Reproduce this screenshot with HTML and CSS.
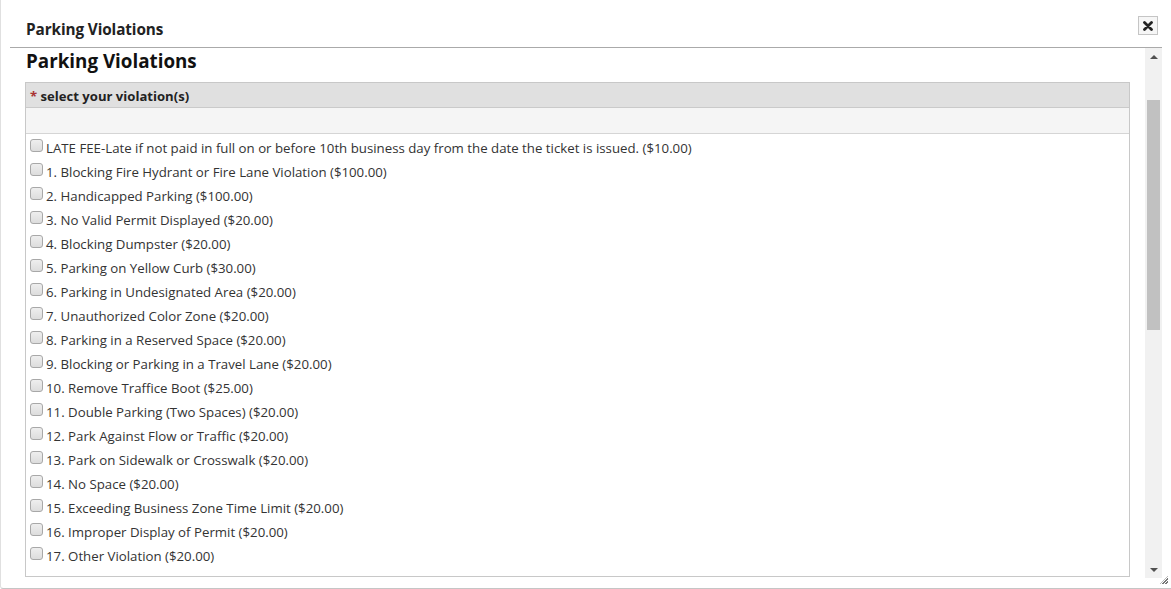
FILE: index.html
```html
<!DOCTYPE html>
<html>
<head>
<meta charset="utf-8">
<link rel="stylesheet" href="styles.css">
</head>
<body>
<div class="dialog">
  <div class="titlebar">
    <span class="title">Parking Violations</span>
    <button class="close" type="button" aria-label="Close">
      <svg width="10" height="10" viewBox="0 0 10 10"><path d="M1.5 1.5 L8.5 8.5 M8.5 1.5 L1.5 8.5" stroke="#222" stroke-width="2.8" stroke-linecap="round"/></svg>
    </button>
  </div>
  <div class="body">
    <div class="content">
      <h2 class="heading">Parking Violations</h2>
      <div class="box">
        <div class="box-head"><span class="req">*</span> select your violation(s)</div>
        <div class="box-sub"></div>
        <ul class="list">
          <li><input type="checkbox"><span>LATE FEE-Late if not paid in full on or before 10th business day from the date the ticket is issued. ($10.00)</span></li>
          <li><input type="checkbox"><span>1. Blocking Fire Hydrant or Fire Lane Violation ($100.00)</span></li>
          <li><input type="checkbox"><span>2. Handicapped Parking ($100.00)</span></li>
          <li><input type="checkbox"><span>3. No Valid Permit Displayed ($20.00)</span></li>
          <li><input type="checkbox"><span>4. Blocking Dumpster ($20.00)</span></li>
          <li><input type="checkbox"><span>5. Parking on Yellow Curb ($30.00)</span></li>
          <li><input type="checkbox"><span>6. Parking in Undesignated Area ($20.00)</span></li>
          <li><input type="checkbox"><span>7. Unauthorized Color Zone ($20.00)</span></li>
          <li><input type="checkbox"><span>8. Parking in a Reserved Space ($20.00)</span></li>
          <li><input type="checkbox"><span>9. Blocking or Parking in a Travel Lane ($20.00)</span></li>
          <li><input type="checkbox"><span>10. Remove Traffice Boot ($25.00)</span></li>
          <li><input type="checkbox"><span>11. Double Parking (Two Spaces) ($20.00)</span></li>
          <li><input type="checkbox"><span>12. Park Against Flow or Traffic ($20.00)</span></li>
          <li><input type="checkbox"><span>13. Park on Sidewalk or Crosswalk ($20.00)</span></li>
          <li><input type="checkbox"><span>14. No Space ($20.00)</span></li>
          <li><input type="checkbox"><span>15. Exceeding Business Zone Time Limit ($20.00)</span></li>
          <li><input type="checkbox"><span>16. Improper Display of Permit ($20.00)</span></li>
          <li><input type="checkbox"><span>17. Other Violation ($20.00)</span></li>
        </ul>
      </div>
    </div>
    <div class="scrollbar">
      <div class="arrow up"></div>
      <div class="track"><div class="thumb"></div></div>
      <div class="arrow down"></div>
    </div>
  </div>
  <div class="footer"><div class="grip"></div></div>
</div>
</body>
</html>
```
FILE: styles.css
```css
* { box-sizing: border-box; }
html, body { margin: 0; padding: 0; background: #fff; }
body {
  font-family: "Open Sans", "Noto Sans", sans-serif;
  color: #333;
  width: 1171px;
  height: 589px;
  overflow: hidden;
}
.dialog {
  width: 1171px;
  height: 589px;
  border-bottom: 1px solid #c5c5c5;
  border-left: 1px solid #e0e0e0;
  border-bottom-left-radius: 3px;
  display: flex;
  flex-direction: column;
}
.titlebar {
  height: 47px;
  display: flex;
  align-items: center;
  justify-content: space-between;
  padding: 11px 13px 0 25px;
}
.title {
  font-weight: 700;
  font-size: 15.3px;
  color: #222;
  letter-spacing: -0.1px;
}
.close {
  width: 20px;
  height: 19px;
  margin-top: -7px;
  border: 1px solid #c5c5c5;
  background: #f6f6f6;
  padding: 0;
  display: flex;
  align-items: center;
  justify-content: center;
}
.body {
  margin-left: 9px;
  width: 1152px;
  height: 531px;
  border-top: 1px solid #aaa;
  display: flex;
}
.content {
  flex: 1;
  overflow: hidden;
  padding: 0 15px 0 15px;
}
.heading {
  margin: 1px 0 0 1px;
  font-size: 18.8px;
  font-weight: 700;
  color: #111;
  line-height: 24px;
  height: 33px;
}
.box {
  border: 1px solid #c8c8c8;
  height: 495px;
}
.box-head {
  height: 25px;
  background: #e0e0e0;
  border-bottom: 1px solid #cacaca;
  font-size: 13.1px;
  font-weight: 700;
  color: #222;
  padding-left: 4px;
  line-height: 26px;
}
.req { color: #a33; }
.box-sub {
  height: 26px;
  background: #f5f5f5;
  border-bottom: 1px solid #d5d5d5;
}
.list {
  list-style: none;
  margin: 0;
  padding: 2px 0 0 4px;
}
.list li {
  height: 24px;
  display: flex;
  align-items: center;
  font-size: 13.25px;
  color: #333;
}
.list input {
  margin: 0 3px 0 0;
  width: 13px;
  height: 13px;
  position: relative;
  top: -3px;
  appearance: none;
  border: 1px solid #a8a8a8;
  border-radius: 3px;
  background: linear-gradient(#eee, #ddd);
}
.scrollbar {
  width: 17px;
  background: #f1f1f1;
  display: flex;
  flex-direction: column;
}
.arrow {
  height: 17px;
  display: flex;
  align-items: center;
  justify-content: center;
}
.arrow.up::before {
  content: "";
  border-left: 4px solid transparent;
  border-right: 4px solid transparent;
  border-bottom: 4px solid #505050;
}
.arrow.down::before {
  content: "";
  border-left: 4px solid transparent;
  border-right: 4px solid transparent;
  border-top: 4px solid #505050;
}
.track {
  flex: 1;
  padding: 35px 2px 0 2px;
}
.thumb {
  height: 230px;
  background: #c1c1c1;
}
.footer {
  flex: 1;
  display: flex;
  justify-content: flex-end;
  padding-right: 3px;
}
.grip {
  width: 8px;
  height: 8px;
  margin-top: -2px;
  background: repeating-linear-gradient(135deg, transparent 0 1px, #777 1px 2px);
  clip-path: polygon(100% 0, 100% 100%, 0 100%);
}
```
